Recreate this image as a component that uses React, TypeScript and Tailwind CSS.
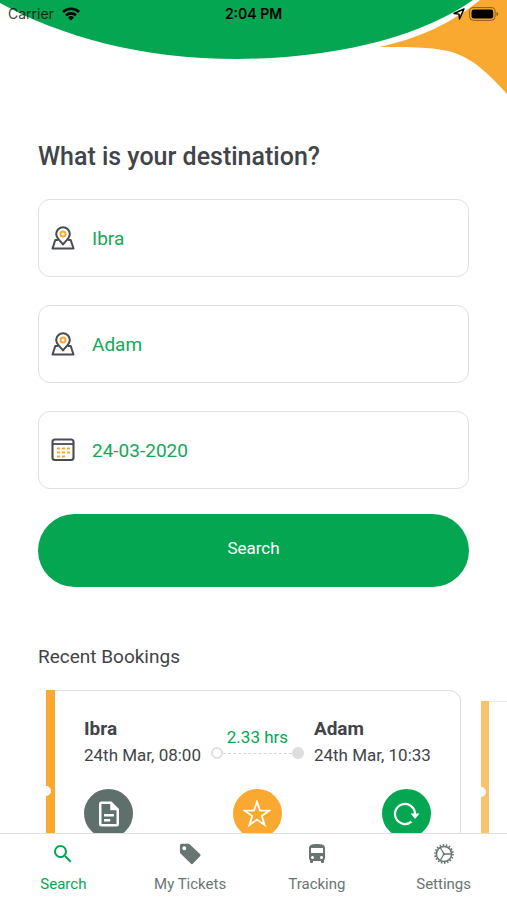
import { useState } from 'react';
import { MdDirectionsBus, MdSearch } from 'react-icons/md';

interface Booking {
    from: string;
    departure: string;
    to: string;
    arrival: string;
    duration: string;
}

interface IconProps {
    className?: string;
}

const booking: Booking = {
    from: 'Ibra',
    departure: '24th Mar, 08:00',
    to: 'Adam',
    arrival: '24th Mar, 10:33',
    duration: '2.33 hrs',
};

function PlaceIcon() {
    return (
        <svg viewBox="0 0 24 24" className="w-6 h-6" fill="none" stroke="#484b50" strokeWidth="2" strokeLinejoin="round" strokeLinecap="round">
            <path d="M6.400 14H4.300L1.500 22.500h21L19.700 14h-2.100" />
            <path d="M12 18.500C9.500 15 5.200 12.200 5.200 8a6.800 6.800 0 0 1 13.600 0c0 4.200-4.300 7-6.800 10.500z" />
            <circle cx="12" cy="8" r="2.500" stroke="#f9a92f" />
        </svg>
    );
}

function CalendarIcon() {
    return (
        <svg viewBox="0 0 24 24" className="w-6 h-6" fill="none">
            <rect x="1.500" y="1.500" width="21" height="20.500" rx="2.500" stroke="#484b50" strokeWidth="2.100" />
            <path d="M1.500 6h21" stroke="#484b50" strokeWidth="1.800" />
            <path d="M6 10.500h3M11 10.500h3M16 10.500h3M6 14.500h3M11 14.500h3M16 14.500h3M6 18.500h3M11 18.500h3" stroke="#f9a92f" strokeWidth="2" />
        </svg>
    );
}

function DocumentIcon() {
    return (
        <svg viewBox="0 0 24 24" className="w-[30px] h-[30px]" fill="currentColor">
            <path d="M6 2a2 2 0 0 0-2 2v16a2 2 0 0 0 2 2h12a2 2 0 0 0 2-2V8l-6-6H6zm0 2h7v5h5v11H6V4zm2 8v2h8v-2H8zm0 4v2h5v-2H8z" />
        </svg>
    );
}

function StarIcon() {
    return (
        <svg viewBox="0 0 28 28" className="w-7 h-7" fill="none" stroke="currentColor" strokeWidth="1.800">
            <path d="M14 1.800l3 8.800h9.200l-7.400 5.500 2.800 8.900-7.600-5.400L6.400 25l2.800-8.900-7.400-5.500H11z" />
        </svg>
    );
}

function RefreshIcon() {
    return (
        <svg viewBox="0 0 28 28" className="w-7 h-7" fill="none">
            <path d="M19.500 21.600A10 10 0 1 1 23 14" stroke="currentColor" strokeWidth="2.200" />
            <path d="M18.600 13.500h9L23.100 19z" fill="currentColor" />
        </svg>
    );
}

function TagIcon({ className }: IconProps) {
    return (
        <svg viewBox="0 0 26 26" className={className} fill="currentColor" fillRule="evenodd">
            <path d="M4 2h7.500c.6 0 1 .2 1.400.6l10.900 10.300c.8.800.8 1.700 0 2.500l-7.500 8c-.8.800-1.700.8-2.500 0L2.700 12.500c-.4-.4-.6-.8-.6-1.400V4c0-1.200.8-2 1.900-2zm2.800 2.700a2.100 2.100 0 1 0 0 4.200 2.100 2.100 0 0 0 0-4.200z" />
        </svg>
    );
}

function GearIcon({ className }: IconProps) {
    return (
        <svg viewBox="0 0 24 24" className={className} fill="none" stroke="currentColor">
            <circle cx="12" cy="12" r="9" strokeWidth="1.800" strokeDasharray="1.500 1.640" />
            <circle cx="12" cy="12" r="7.600" strokeWidth="1.500" />
            <path d="M12 12h7.500M12 12L8.200 5.500M12 12l-3.800 6.500" strokeWidth="1.300" />
            <circle cx="12" cy="12" r="1.200" fill="currentColor" stroke="none" />
        </svg>
    );
}

const tabs = [
    { label: 'Search', icon: MdSearch },
    { label: 'My Tickets', icon: TagIcon },
    { label: 'Tracking', icon: MdDirectionsBus },
    { label: 'Settings', icon: GearIcon },
];

function StatusBar() {
    return (
        <div className="relative grid grid-cols-3 items-center h-7 px-2 font-['Inter',sans-serif] text-sm text-black">
            <div className="flex items-center gap-2">
                <span className="opacity-75">Carrier</span>
                <svg viewBox="0 0 18 14" className="w-[18px] h-[14px]" fill="none" stroke="#000" strokeWidth="2.600">
                    <path d="M1 5a11.500 11.500 0 0 1 16 0" />
                    <path d="M4 8.400a7.200 7.200 0 0 1 10 0" />
                    <path d="M9 13.500l-3-3a4.300 4.300 0 0 1 6 0z" fill="#000" stroke="none" />
                </svg>
            </div>
            <span className="text-center font-semibold">2:04 PM</span>
            <div className="flex items-center justify-end gap-1">
                <svg viewBox="0 0 12 12" className="w-3 h-3" fill="none" stroke="#000" strokeWidth="1.400" strokeLinejoin="round">
                    <path d="M11 1L1 5.500l5 .6.500 4.900z" />
                </svg>
                <svg viewBox="0 0 30 14" className="w-[30px] h-[14px]">
                    <rect x="0.600" y="0.600" width="25.500" height="12.800" rx="4" fill="none" stroke="#000" strokeOpacity="0.450" />
                    <rect x="2.500" y="2.500" width="21.700" height="9" rx="2.200" />
                    <path d="M27.500 5v4c1-.3 1.700-1.100 1.700-2s-.7-1.700-1.700-2z" fillOpacity="0.450" />
                </svg>
            </div>
        </div>
    );
}

function Header() {
    return (
        <header className="relative h-[100px]">
            <svg viewBox="0 0 507 100" preserveAspectRatio="none" className="absolute inset-0 w-full h-full">
                <path d="M379 47C421 38 453 22 480 0h27v94c-16-18-30-31-45-38-18-9-45-9-83-9z" fill="#f9a92f" />
                <path d="M0 3C60 36 140 59 238 59 340 58 422 36 473 0H0z" fill="#05a651" />
            </svg>
            <StatusBar />
        </header>
    );
}

interface FieldProps {
    id: string;
    label: string;
    icon: React.ReactNode;
    initialValue: string;
}

function Field({ id, label, icon, initialValue }: FieldProps) {
    const [value, setValue] = useState(initialValue);

    return (
        <div className="flex items-center h-[78px] px-3 border border-[#dfdfdf] rounded-xl">
            <label htmlFor={id} aria-label={label} className="pr-[17px]">
                {icon}
            </label>
            <input
                id={id}
                value={value}
                onChange={(e) => setValue(e.target.value)}
                className="flex-1 min-w-0 pt-0.5 text-[19px] text-[#14a857] bg-transparent outline-none"
            />
        </div>
    );
}

function BookingCard({ from, departure, to, arrival, duration }: Booking) {
    return (
        <article className="flex w-[90%] shrink-0 h-52">
            <div className="relative w-[9px] bg-[#f9a92f] overflow-hidden">
                <span className="absolute -left-[5px] top-24 w-[10px] h-[10px] rounded-full bg-white" />
            </div>
            <div className="flex-1 min-w-0 px-[29px] pt-6 border border-l-0 border-[#dfdfdf] rounded-r-xl text-[#414448]">
                <div className="flex justify-between whitespace-nowrap">
                    <div>
                        <h3 className="text-[19px] leading-7 font-bold">{from}</h3>
                        <p className="text-[17px] leading-6">{departure}</p>
                    </div>
                    <div className="flex-1 mx-[10px] pt-3">
                        <p className="text-center text-[17px] leading-5 text-[#05a651]">{duration}</p>
                        <div className="flex items-center">
                            <span className="w-3 h-3 rounded-full border-2 border-[#dedede]" />
                            <span className="flex-1 border-t border-dashed border-[#d4d4d4]" />
                            <span className="w-3 h-3 rounded-full bg-[#dedede]" />
                        </div>
                    </div>
                    <div>
                        <h3 className="text-[19px] leading-7 font-bold">{to}</h3>
                        <p className="text-[17px] leading-6">{arrival}</p>
                    </div>
                </div>
                <div className="flex justify-between mt-[22px] text-white">
                    <button aria-label="Details" className="flex items-center justify-center w-[49px] h-[49px] rounded-full bg-[#5e6f6c]">
                        <DocumentIcon />
                    </button>
                    <button aria-label="Favourite" className="flex items-center justify-center w-[49px] h-[49px] rounded-full bg-[#f9a92f]">
                        <StarIcon />
                    </button>
                    <button aria-label="Book again" className="flex items-center justify-center w-[49px] h-[49px] rounded-full bg-[#05a651]">
                        <RefreshIcon />
                    </button>
                </div>
            </div>
        </article>
    );
}

export default function App() {
    const [active, setActive] = useState('Search');

    return (
        <div className="flex flex-col h-screen bg-white font-['Roboto',sans-serif] overflow-hidden">
            <main className="flex-1 min-h-0 overflow-hidden">
                <Header />

                <form className="px-[38px] pt-[41px]" onSubmit={(e) => e.preventDefault()}>
                    <h1 className="text-[25px] leading-8 font-medium text-[#414448]">What is your destination?</h1>
                    <div className="flex flex-col gap-7 mt-[26px]">
                        <Field id="from" label="From" icon={<PlaceIcon />} initialValue="Ibra" />
                        <Field id="to" label="To" icon={<PlaceIcon />} initialValue="Adam" />
                        <Field id="date" label="Date" icon={<CalendarIcon />} initialValue="24-03-2020" />
                    </div>
                    <button className="w-full h-[73px] mt-[25px] pb-1 rounded-full bg-[#05a651] text-white text-[17px]">
                        Search
                    </button>
                </form>

                {/* Recent bookings */}
                <section className="mt-14">
                    <h2 className="px-[38px] text-[19px] leading-7 text-[#414448]">Recent Bookings</h2>
                    <div className="flex gap-5 mt-[19px] pl-[46px] overflow-hidden">
                        <BookingCard {...booking} />
                        <div className="flex w-[90%] shrink-0 mt-[11px] h-48 opacity-70">
                            <div className="relative w-2 bg-[#f9a92f] overflow-hidden">
                                <span className="absolute -left-[5px] top-[86px] w-[10px] h-[10px] rounded-full bg-white" />
                            </div>
                            <div className="flex-1 border border-l-0 border-[#dfdfdf] rounded-r-xl" />
                        </div>
                    </div>
                </section>
            </main>

            <nav className="grid grid-cols-4 h-[67px] shrink-0 border-t border-[#dfdfdf] bg-white">
                {tabs.map(({ label, icon: Icon }) => (
                    <button
                        key={label}
                        onClick={() => setActive(label)}
                        className={`flex flex-col items-center pt-2 gap-2 text-[15px] leading-5 ${active === label ? 'text-[#05a651]' : 'text-[#687573]'}`}
                    >
                        <Icon className="w-6 h-6" />
                        {label}
                    </button>
                ))}
            </nav>
        </div>
    );
}
